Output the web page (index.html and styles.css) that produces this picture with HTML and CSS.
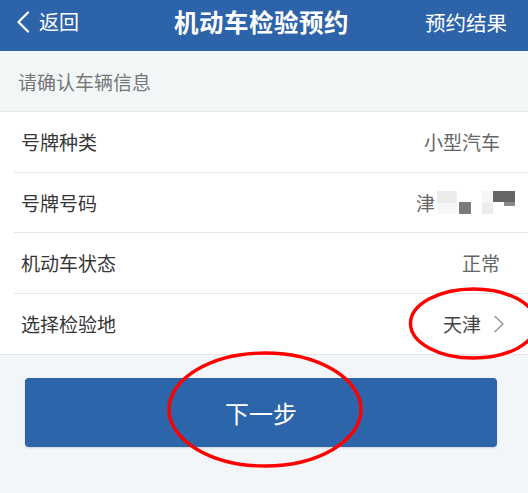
FILE: index.html
```html
<!DOCTYPE html>
<html lang="zh-CN">
<head>
<meta charset="utf-8">
<title>机动车检验预约</title>
<link rel="stylesheet" href="styles.css">
</head>
<body>
<div class="page">
  <header class="topbar">
    <div class="back">
      <svg class="back-icon" width="14" height="22" viewBox="0 0 14 22"><path d="M12 1.5 L2.5 11 L12 20.5" fill="none" stroke="#fff" stroke-width="2.2" stroke-linecap="round" stroke-linejoin="round"/></svg>
      <span>返回</span>
    </div>
    <h1 class="title">机动车检验预约</h1>
    <div class="result">预约结果</div>
  </header>

  <div class="section-label">请确认车辆信息</div>

  <div class="list">
    <div class="row"><span class="label">号牌种类</span><span class="value">小型汽车</span></div>
    <div class="row"><span class="label">号牌号码</span>
      <span class="value plate">津<span class="mosaic">
        <i class="m m1"></i><i class="m m2"></i><i class="m m3"></i><i class="m m4"></i><i class="m m5"></i><i class="m m6"></i><i class="m m7"></i>
      </span></span>
    </div>
    <div class="row"><span class="label">机动车状态</span><span class="value">正常</span></div>
    <div class="row row-link"><span class="label">选择检验地</span>
      <span class="value strong">天津<svg class="chev" width="12" height="18" viewBox="0 0 12 18"><path d="M2 1.5 L10 9 L2 16.5" fill="none" stroke="#9a9a9a" stroke-width="1.6" stroke-linecap="round" stroke-linejoin="round"/></svg></span>
    </div>
  </div>

  <div class="actions">
    <button class="next">下一步</button>
  </div>

  <svg class="marks" width="528" height="493" viewBox="0 0 528 493">
    <ellipse cx="473.5" cy="323.5" rx="63" ry="34.5" fill="none" stroke="#f00" stroke-width="3.4"/>
    <ellipse cx="265" cy="409.5" rx="96" ry="56.5" fill="none" stroke="#f00" stroke-width="3.4"/>
  </svg>
</div>
</body>
</html>
```

FILE: styles.css
```css
* { box-sizing: border-box; }
html, body { margin: 0; padding: 0; }
body {
  width: 528px;
  height: 493px;
  overflow: hidden;
  background: #f3f6f8;
  font-family: "Noto Sans CJK SC", "Noto Sans", sans-serif;
}
.page {
  position: relative;
  width: 528px;
  height: 493px;
}
.topbar {
  height: 51px;
  background: #2d64a9;
  color: #fff;
  display: flex;
  align-items: center;
  justify-content: space-between;
  padding: 0 21px 8px 16px;
}
.back {
  display: flex;
  align-items: center;
  gap: 9px;
  font-size: 20px;
  width: 120px;
}
.back-icon { display: block; }
.title {
  margin: 0;
  font-size: 24.5px;
  font-weight: 700;
  letter-spacing: 0.5px;
}
.result {
  font-size: 20.5px;
  width: 120px;
  text-align: right;
}
.section-label {
  height: 61px;
  background: #f1f6f7;
  border-bottom: 1px solid #e4e7e8;
  color: #777;
  font-size: 19px;
  display: flex;
  align-items: center;
  padding: 0 0 0 18px;
}
.list {
  background: #fff;
  border-bottom: 1px solid #e2e4e5;
}
.row {
  height: 60.5px;
  margin-left: 14px;
  padding: 0 28px 0 7px;
  display: flex;
  align-items: center;
  justify-content: space-between;
  border-bottom: 1px solid #e5e6e7;
  font-size: 19px;
}
.row:last-child { border-bottom: none; }
.row-link { padding-right: 23px; }
.label { color: #363636; }
.value { color: #666; display: flex; align-items: center; }
.value.strong { color: #444; }
.chev { margin-left: 12px; display: block; }
.plate { position: relative; padding-right: 80px; margin-right: -15px; }
.mosaic { position: absolute; left: 20px; top: 0; width: 80px; height: 30px; }
.m { position: absolute; display: block; }
.m1 { left: 1px; top: 2px; width: 20px; height: 12px; background: #ececec; }
.m2 { left: 1px; top: 14px; width: 20px; height: 11px; background: #f7f7f7; }
.m3 { left: 23px; top: 13px; width: 12px; height: 12px; background: #7a7a7a; }
.m4 { left: 46px; top: 14px; width: 11px; height: 11px; background: #ececec; }
.m5 { left: 46px; top: 2px; width: 11px; height: 12px; background: #f6f6f6; }
.m6 { left: 57px; top: 2px; width: 22px; height: 11px; background: #666; }
.m7 { left: 68px; top: 13px; width: 11px; height: 4px; background: #8a8a8a; }
.actions {
  padding: 23px 31px 0 25px;
}
.next {
  display: block;
  width: 100%;
  height: 69px;
  border: none;
  border-radius: 4px;
  background: #2d65aa;
  color: #fff;
  font-family: "Noto Sans CJK SC", sans-serif;
  font-size: 24px;
  box-shadow: 0 1px 2px rgba(0,0,0,0.15);
}
.marks {
  position: absolute;
  left: 0;
  top: 0;
  pointer-events: none;
}
```
